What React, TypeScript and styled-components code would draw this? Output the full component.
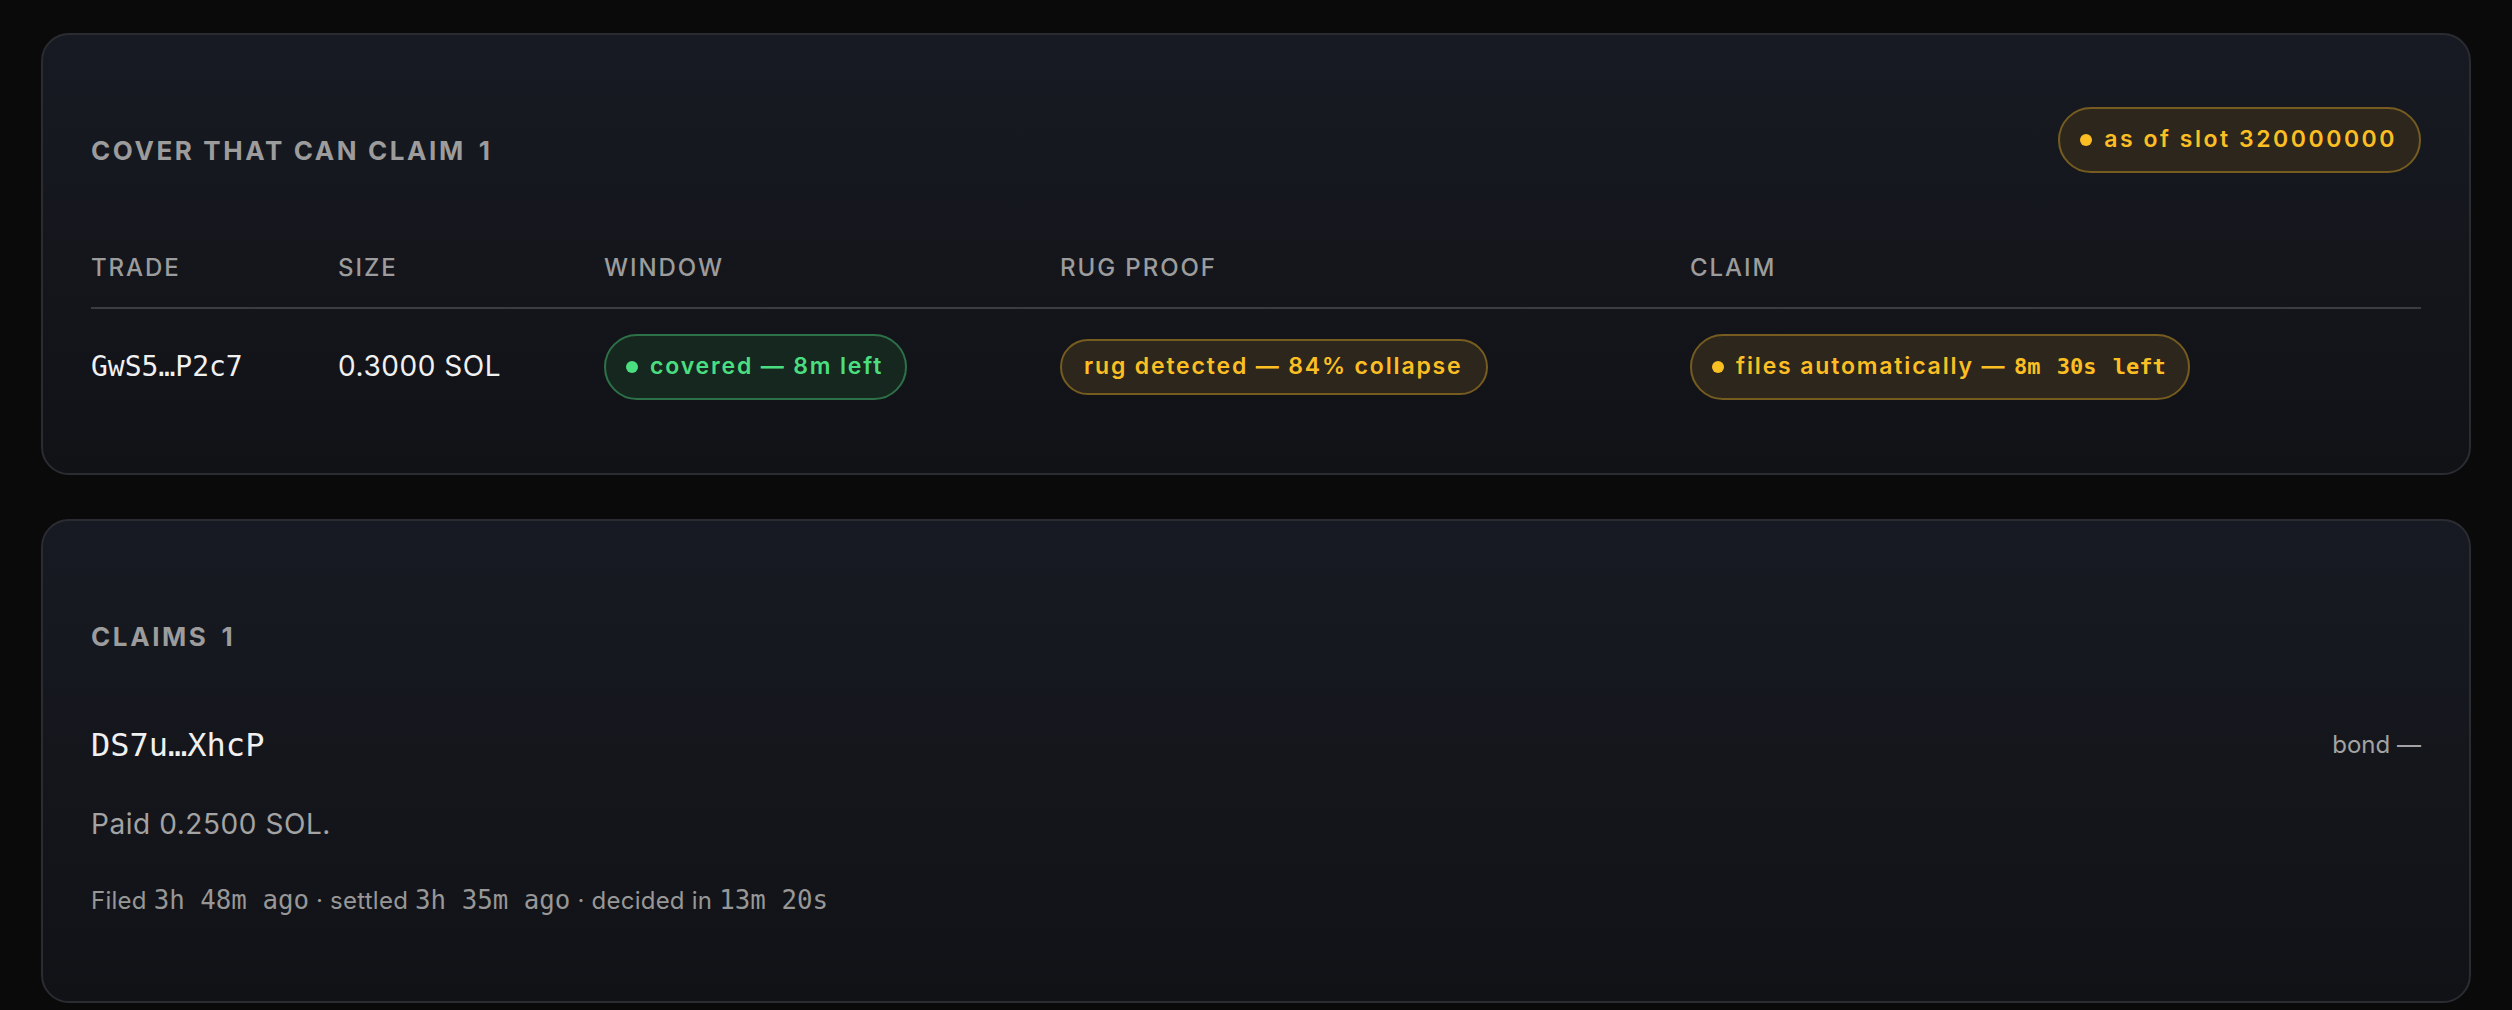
import React from "react";
import styled, { createGlobalStyle } from "styled-components";

const COLORS = {
  page: "#0a0a0a",
  cardTop: "#171a22",
  cardBottom: "#111216",
  cardBorder: "#2a2c31",
  divider: "#3b3c41",
  label: "#9c9c9c",
  text: "#f0f0f0",
  muted: "#a3a3a3",
  faint: "#979797",
  amber: "#fbbf24",
  amberBg: "#2c261c",
  amberBorder: "#765c1f",
  green: "#4ade80",
  greenBg: "#16271f",
  greenBorder: "#2d7148",
};

const MONO = `"DejaVu Sans Mono", "Liberation Mono", monospace`;

const GlobalStyle = createGlobalStyle`
  * {
    box-sizing: border-box;
  }

  html,
  body {
    margin: 0;
    background: ${COLORS.page};
  }

  body {
    font-family: Inter, "Liberation Sans", sans-serif;
    color: ${COLORS.text};
  }
`;

const Page = styled.main`
  display: flex;
  flex-direction: column;
  gap: 44px;
  padding: 33px 41px 9px;
`;

const Card = styled.section`
  border: 2px solid ${COLORS.cardBorder};
  border-radius: 28px;
  background: linear-gradient(180deg, ${COLORS.cardTop} 0%, ${COLORS.cardBottom} 100%);
  padding: 72px 48px 73px;
`;

const CardHeader = styled.header`
  display: flex;
  justify-content: space-between;
  align-items: flex-start;
`;

const SectionTitle = styled.h2`
  margin: 28px 0 0;
  font-size: 26px;
  line-height: 1.2;
  font-weight: 700;
  letter-spacing: 0.1em;
  text-transform: uppercase;
  color: ${COLORS.label};
`;

const Count = styled.span`
  margin-left: 13px;
`;

const Table = styled.div`
  margin-top: 81px;
`;

const TableRow = styled.div<{ $head?: boolean }>`
  display: grid;
  grid-template-columns: 247px 266px 456px 630px 1fr;
  align-items: center;
  padding: ${(p) => (p.$head ? "0 0 25px" : "25px 0 0")};
  border-bottom: ${(p) => (p.$head ? `2px solid ${COLORS.divider}` : "none")};
`;

const HeadCell = styled.div`
  font-size: 24px;
  line-height: 1.2;
  font-weight: 500;
  letter-spacing: 0.08em;
  text-transform: uppercase;
  color: ${COLORS.label};
`;

const Cell = styled.div<{ $mono?: boolean }>`
  font-family: ${(p) => (p.$mono ? MONO : "inherit")};
  font-size: 28px;
  line-height: 1.2;
  letter-spacing: ${(p) => (p.$mono ? "0" : "0.02em")};
  color: ${COLORS.text};
`;

type Tone = "green" | "amber";

const Pill = styled.span<{ $tone: Tone; $compact?: boolean; $wide?: boolean }>`
  display: inline-flex;
  align-items: center;
  gap: 12px;
  padding: ${(p) => (p.$compact ? "12px 23px 12px 22px" : "17px 22px 17px 20px")};
  border-radius: 999px;
  border: 2px solid ${(p) => (p.$tone === "green" ? COLORS.greenBorder : COLORS.amberBorder)};
  background: ${(p) => (p.$tone === "green" ? COLORS.greenBg : COLORS.amberBg)};
  color: ${(p) => (p.$tone === "green" ? COLORS.green : COLORS.amber)};
  font-size: 23px;
  line-height: 1.2;
  font-weight: 600;
  letter-spacing: ${(p) => (p.$wide ? "0.11em" : "0.08em")};
  white-space: nowrap;
`;

const Dot = styled.span`
  flex: none;
  width: 12px;
  height: 12px;
  border-radius: 50%;
  background: currentColor;
`;

const PillMono = styled.span`
  font-family: ${MONO};
  font-size: 22px;
  font-weight: 700;
  letter-spacing: 0;
  word-spacing: 3px;
`;

const ClaimTop = styled.div`
  margin-top: 74px;
  display: flex;
  justify-content: space-between;
  align-items: center;
`;

const ClaimId = styled.span`
  font-family: ${MONO};
  font-size: 32px;
  line-height: 1.2;
  color: ${COLORS.text};
`;

const Bond = styled.span`
  font-size: 24px;
  line-height: 1.2;
  color: ${COLORS.muted};
`;

const Paid = styled.p`
  margin: 43px 0 0;
  font-size: 28px;
  line-height: 1.2;
  letter-spacing: 0.02em;
  color: ${COLORS.muted};
`;

const Meta = styled.p`
  margin: 44px 0 0;
  padding-bottom: 12px;
  font-size: 24px;
  line-height: 1.2;
  letter-spacing: 0.01em;
  color: ${COLORS.faint};
`;

const MetaMono = styled.span`
  font-family: ${MONO};
  font-size: 25.8px;
  letter-spacing: 0;
`;

const App: React.FC = () => {
  return (
    <>
      <GlobalStyle />
      <Page>
        <Card>
          <CardHeader>
            <SectionTitle>
              Cover that can claim<Count>1</Count>
            </SectionTitle>
            <Pill $tone="amber" $wide>
              <Dot />
              <span>as of slot 320000000</span>
            </Pill>
          </CardHeader>
          <Table>
            <TableRow $head>
              <HeadCell>Trade</HeadCell>
              <HeadCell>Size</HeadCell>
              <HeadCell>Window</HeadCell>
              <HeadCell>Rug proof</HeadCell>
              <HeadCell>Claim</HeadCell>
            </TableRow>
            <TableRow>
              <Cell $mono>GwS5…P2c7</Cell>
              <Cell>0.3000 SOL</Cell>
              <Cell>
                <Pill $tone="green">
                  <Dot />
                  <span>covered — 8m left</span>
                </Pill>
              </Cell>
              <Cell>
                <Pill $tone="amber" $compact>
                  rug detected — 84% collapse
                </Pill>
              </Cell>
              <Cell>
                <Pill $tone="amber">
                  <Dot />
                  <span>
                    files automatically — <PillMono>8m 30s left</PillMono>
                  </span>
                </Pill>
              </Cell>
            </TableRow>
          </Table>
        </Card>

        <Card>
          <CardHeader>
            <SectionTitle>
              Claims<Count>1</Count>
            </SectionTitle>
          </CardHeader>
          <ClaimTop>
            <ClaimId>DS7u…XhcP</ClaimId>
            <Bond>bond —</Bond>
          </ClaimTop>
          <Paid>Paid 0.2500 SOL.</Paid>
          <Meta>
            Filed <MetaMono>3h 48m ago</MetaMono> · settled{" "}
            <MetaMono>3h 35m ago</MetaMono> · decided in <MetaMono>13m 20s</MetaMono>
          </Meta>
        </Card>
      </Page>
    </>
  );
};

export default App;
